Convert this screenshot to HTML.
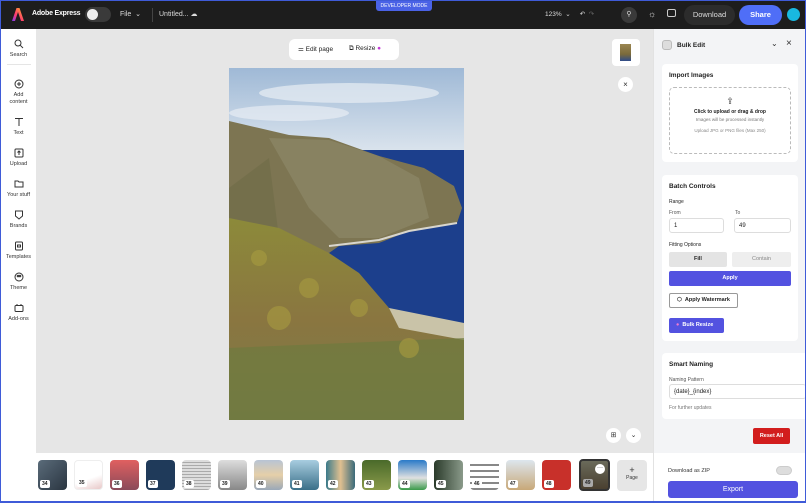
<!DOCTYPE html>
<html><head><meta charset="utf-8"><style>
*{box-sizing:border-box;margin:0;padding:0}
body{width:806px;height:503px;overflow:hidden;font-family:"Liberation Sans",sans-serif;position:relative;background:#3f5bd8}
.a{position:absolute}
#frame{position:absolute;left:1px;top:1px;right:1px;bottom:2px;background:#fff;overflow:hidden}
.top{left:0;top:0;width:804px;height:28px;background:#1d1d1d;color:#ddd;font-size:8px}
.side{left:0;top:28px;width:35px;height:472px;background:#fff}
.si{position:absolute;left:0;width:35px;text-align:center;font-size:5.5px;color:#333;line-height:7px}
.si svg{display:block;margin:0 auto 3px}
.canvas{left:35px;top:28px;width:617px;height:424px;background:#e6e6e6}
.strip{left:35px;top:452px;width:617px;height:48px;background:#fff}
.th{position:absolute;top:7px;width:29px;height:30px;border-radius:4px;overflow:hidden}
.th b{position:absolute;left:2px;bottom:2px;background:#fff;color:#222;font-size:5px;padding:1px 2px;border-radius:2px;font-weight:bold}
.panel{left:652px;top:28px;width:152px;height:472px;background:#f3f4f6;border-left:1px solid #e2e2e2}
.card{position:absolute;left:8px;width:136px;background:#fff;border-radius:4px}
.t{font-size:6.5px;font-weight:bold;color:#222;position:absolute}
.s{font-size:5px;color:#555;position:absolute}
.inp{position:absolute;height:15px;border:1px solid #ddd;border-radius:3px;background:#fff;font-size:6px;padding:4px 4px;color:#222}
</style></head><body>
<div id="frame">
<div class="a top">
  <svg class="a" style="left:11px;top:7px" width="12" height="13" viewBox="0 0 12 13"><defs><linearGradient id="g" x1="0" x2="1" y1="1" y2="0"><stop offset="0" stop-color="#7b3df2"/><stop offset=".4" stop-color="#ff3a6e"/><stop offset="1" stop-color="#ffb627"/></linearGradient></defs><path d="M4.5 0H7.5L12 13H9L6 4 3 13H0Z" fill="url(#g)"/></svg>
  <div class="a" style="left:31px;top:9px;font-weight:bold;color:#fff;font-size:7px;letter-spacing:-.2px">Adobe Express</div>
  <div class="a" style="left:84px;top:6px;width:26px;height:15px;border-radius:8px;background:#3a3a3a"></div>
  <div class="a" style="left:86px;top:8px;width:11px;height:11px;border-radius:50%;background:#eee"></div>
  <div class="a" style="left:119px;top:9px;font-size:7px">File &nbsp;⌄</div>
  <div class="a" style="left:151px;top:7px;width:1px;height:14px;background:#444"></div>
  <div class="a" style="left:158px;top:9px;font-size:7px">Untitled... ☁</div>
  <div class="a" style="left:375px;top:0;width:56px;height:10px;background:#4a62e6;border-radius:0 0 3px 3px;font-size:5px;color:#fff;text-align:center;line-height:10px">DEVELOPER MODE</div>
  <div class="a" style="left:544px;top:9px;font-size:6.5px">123% &nbsp;⌄ &nbsp;&nbsp;&nbsp; ↶ &nbsp;<span style="color:#666">↷</span></div>
  <div class="a" style="left:620px;top:6px;width:16px;height:16px;border-radius:50%;background:#3a3a3a;font-size:7px;text-align:center;line-height:16px">⚲</div>
  <div class="a" style="left:647px;top:8px;font-size:9px">☼</div>
  <div class="a" style="left:666px;top:8px;width:9px;height:8px;border:1px solid #ccc;border-radius:2px"></div>
  <div class="a" style="left:683px;top:4px;width:51px;height:20px;border-radius:10px;background:#2c2c2c;color:#ddd;font-size:7.5px;text-align:center;line-height:20px">Download</div>
  <div class="a" style="left:738px;top:4px;width:43px;height:20px;border-radius:10px;background:#4f6ef7;color:#fff;font-size:7.5px;text-align:center;line-height:20px;font-weight:bold">Share</div>
  <div class="a" style="left:786px;top:7px;width:13px;height:13px;border-radius:50%;background:#19b8e0"></div>
</div>

<div class="a side">
  <div style="position:absolute;left:6px;top:35px;width:24px;height:1px;background:#e5e5e5"></div>
  <div class="si" style="top:10px"><svg width="10" height="10" viewBox="0 0 10 10" fill="none" stroke="#333" stroke-width="1"><circle cx="4" cy="4" r="3"/><path d="M6.3 6.3 9 9"/></svg>Search</div>
  <div class="si" style="top:50px"><svg width="10" height="10" viewBox="0 0 10 10" fill="none" stroke="#333"><circle cx="5" cy="5" r="4"/><path d="M5 3v4M3 5h4"/></svg>Add<br>content</div>
  <div class="si" style="top:88px"><svg width="10" height="10" viewBox="0 0 10 10" fill="none" stroke="#333"><path d="M1 1.5h8M5 1.5V9"/></svg>Text</div>
  <div class="si" style="top:119px"><svg width="10" height="10" viewBox="0 0 10 10" fill="none" stroke="#333"><rect x="1" y="1" width="8" height="8" rx="1"/><path d="M5 7V3M3.5 4.5 5 3l1.5 1.5"/></svg>Upload</div>
  <div class="si" style="top:150px"><svg width="10" height="10" viewBox="0 0 10 10" fill="none" stroke="#333"><path d="M1 2h3l1 1h4v5H1z"/></svg>Your stuff</div>
  <div class="si" style="top:181px"><svg width="10" height="10" viewBox="0 0 10 10" fill="none" stroke="#333"><path d="M1.5 1h7v5L5 9 1.5 6z"/></svg>Brands</div>
  <div class="si" style="top:212px"><svg width="10" height="10" viewBox="0 0 10 10" fill="none" stroke="#333"><rect x="1.5" y="1" width="7" height="8" rx="1"/><path d="M3.5 4h3v2h-3z"/></svg>Templates</div>
  <div class="si" style="top:243px"><svg width="10" height="10" viewBox="0 0 10 10" fill="none" stroke="#333"><circle cx="5" cy="5" r="4"/><circle cx="4" cy="4" r=".8"/><circle cx="6" cy="4" r=".8"/></svg>Theme</div>
  <div class="si" style="top:274px"><svg width="10" height="10" viewBox="0 0 10 10" fill="none" stroke="#333"><rect x="1" y="2.5" width="8" height="6" rx="1"/><path d="M3 2.5V1M7 2.5V1"/></svg>Add-ons</div>
</div>

<div class="a canvas">
  <div class="a" style="left:253px;top:10px;width:110px;height:21px;background:#fff;border-radius:6px;font-size:6.5px;color:#222">
    <span class="a" style="left:9px;top:6px">⚌ Edit page</span>
    <span class="a" style="left:60px;top:6px">⧉ Resize <span style="color:#c13ad6">●</span></span>
  </div>
  <div class="a" style="left:576px;top:10px;width:28px;height:27px;background:#fff;border-radius:4px"><div class="a" style="left:8px;top:5px;width:11px;height:17px;background:linear-gradient(#9b8652,#7a6a3a 60%,#2e4c8a)"></div></div>
  <div class="a" style="left:582px;top:48px;width:15px;height:15px;border-radius:50%;background:#fff;font-size:8px;text-align:center;line-height:15px;color:#333">×</div>
  <div class="a" style="left:193px;top:39px;width:235px;height:352px;overflow:hidden">
    <svg width="235" height="352" viewBox="0 0 235 352">
      <defs><linearGradient id="sky" x1="0" y1="0" x2="0" y2="1"><stop offset="0" stop-color="#9fb9d6"/><stop offset="1" stop-color="#dfe7ef"/></linearGradient>
      <linearGradient id="fg" x1="0" y1="0" x2="0" y2="1"><stop offset="0" stop-color="#8c8a3a"/><stop offset=".5" stop-color="#8a7640"/><stop offset="1" stop-color="#7a7a48"/></linearGradient></defs>
      <rect width="235" height="90" fill="url(#sky)"/>
      <ellipse cx="120" cy="25" rx="90" ry="10" fill="#e8eef4" opacity=".7"/>
      <ellipse cx="60" cy="45" rx="60" ry="8" fill="#eef2f6" opacity=".6"/>
      <rect y="82" width="235" height="190" fill="#1c3f8c"/>
      <polygon points="0,53 60,67 100,70 150,88 195,100 225,118 233,140 228,155 180,163 150,175 110,178 100,185 60,175 0,150" fill="#7d7552"/>
      <polygon points="40,70 100,72 150,88 190,110 200,150 150,170 110,170 80,140" fill="#908a6c" opacity=".6"/>
      <polygon points="0,120 40,90 50,170 0,150" fill="#6e6a48" opacity=".6"/>
      <polyline points="100,178 150,172 180,163 228,155" fill="none" stroke="#d8d6ce" stroke-width="2"/>
      <polygon points="0,150 50,160 100,185 130,205 160,240 170,250 235,262 235,352 0,352" fill="url(#fg)"/>
      <polygon points="160,240 235,255 235,272 170,260" fill="#c9c3a8"/>
      <polygon points="0,280 235,270 235,352 0,352" fill="#6d7a3e" opacity=".7"/>
      <g fill="#a89c40" opacity=".6"><circle cx="30" cy="190" r="8"/><circle cx="80" cy="220" r="10"/><circle cx="130" cy="240" r="9"/><circle cx="50" cy="250" r="12"/><circle cx="180" cy="280" r="10"/></g>
    </svg>
  </div>
  <div class="a" style="left:570px;top:399px;width:15px;height:15px;border-radius:50%;background:#fff;font-size:7px;text-align:center;line-height:15px;color:#333">⊞</div>
  <div class="a" style="left:590px;top:399px;width:15px;height:15px;border-radius:50%;background:#fff;font-size:7px;text-align:center;line-height:15px;color:#333">⌄</div>
</div>

<div class="a strip">
  <div class="th" style="left:2px;background:linear-gradient(135deg,#5a6b7a,#2a3540)"><b>34</b></div>
  <div class="th" style="left:38px;background:linear-gradient(160deg,#fff 60%,#e8c8c8);border:1px solid #eee"><b>35</b></div>
  <div class="th" style="left:74px;background:linear-gradient(#e06060,#8a4a5a)"><b>36</b></div>
  <div class="th" style="left:110px;background:#1f3a5a"><b>37</b></div>
  <div class="th" style="left:146px;background:repeating-linear-gradient(#ddd 0 2px,#aaa 2px 3px)"><b>38</b></div>
  <div class="th" style="left:182px;background:linear-gradient(#ddd,#888)"><b>39</b></div>
  <div class="th" style="left:218px;background:linear-gradient(#b8c4d4,#e6cfa8 50%,#9aa8b8)"><b>40</b></div>
  <div class="th" style="left:254px;background:linear-gradient(#a8cde0,#3a6f88)"><b>41</b></div>
  <div class="th" style="left:290px;background:linear-gradient(90deg,#3a7a8a,#e0c090,#3a6a7a)"><b>42</b></div>
  <div class="th" style="left:326px;background:linear-gradient(#4a6a2a,#8a9a4a)"><b>43</b></div>
  <div class="th" style="left:362px;background:linear-gradient(#2a7ac8,#e0e0e0 60%,#3a9a4a)"><b>44</b></div>
  <div class="th" style="left:398px;background:linear-gradient(90deg,#2a3a2a,#8a9a8a)"><b>45</b></div>
  <div class="th" style="left:434px;background:repeating-linear-gradient(#fff 0 4px,#888 4px 6px)"><b>46</b></div>
  <div class="th" style="left:470px;background:linear-gradient(#dde6ee,#c8a878)"><b>47</b></div>
  <div class="th" style="left:506px;background:#c8302a"><b>48</b></div>
  <div class="th" style="left:543px;top:6px;width:31px;height:32px;border:2px solid #333;background:linear-gradient(#6a6a5a,#4a4030)"><b style="background:#aaa">49</b><div class="a" style="right:3px;top:3px;width:10px;height:10px;border-radius:50%;background:#fff;font-size:6px;text-align:center;line-height:8px">···</div></div>
  <div class="a" style="left:581px;top:7px;width:30px;height:31px;background:#e6e6e6;border-radius:4px;font-size:5px;text-align:center;color:#333;padding-top:5px"><span style="font-size:9px">+</span><br>Page</div>
</div>

<div class="a panel">
  <div class="a" style="left:8px;top:11px;width:10px;height:10px;border-radius:3px;background:#ddd;border:1px solid #bbb"></div>
  <div class="t" style="left:23px;top:13px;font-size:6.5px">Bulk Edit</div>
  <div class="a" style="left:117px;top:10px;font-size:8px;color:#333">⌄</div>
  <div class="a" style="left:132px;top:9px;font-size:10px;color:#333">×</div>
  <div class="card" style="top:35px;height:98px">
    <div class="t" style="left:7px;top:8px">Import Images</div>
    <div class="a" style="left:7px;top:23px;width:122px;height:67px;border:1px dashed #bbb;border-radius:5px;text-align:center">
      <div style="font-size:9px;margin-top:8px;color:#333">⇪</div>
      <div style="font-size:5px;font-weight:bold;color:#222;margin-top:2px">Click to upload or drag &amp; drop</div>
      <div style="font-size:4.5px;color:#777;margin-top:2px">Images will be processed instantly</div>
      <div style="font-size:4.5px;color:#888;margin-top:6px">Upload JPG or PNG files (Max 250)</div>
    </div>
  </div>
  <div class="card" style="top:146px;height:166px">
    <div class="t" style="left:7px;top:8px">Batch Controls</div>
    <div class="s" style="left:7px;top:24px;color:#222">Range</div>
    <div class="s" style="left:7px;top:35px">From</div>
    <div class="s" style="left:73px;top:35px">To</div>
    <div class="inp" style="left:7px;top:43px;width:55px">1</div>
    <div class="inp" style="left:72px;top:43px;width:57px">49</div>
    <div class="s" style="left:7px;top:67px;color:#222">Fitting Options</div>
    <div class="a" style="left:7px;top:77px;width:58px;height:15px;background:#e4e4e4;border-radius:2px;font-size:5.5px;text-align:center;line-height:15px;font-weight:bold;color:#222">Fill</div>
    <div class="a" style="left:70px;top:77px;width:59px;height:15px;background:#eee;border-radius:2px;font-size:5.5px;text-align:center;line-height:15px;color:#888">Contain</div>
    <div class="a" style="left:7px;top:96px;width:122px;height:15px;background:#5352e0;border-radius:2px;font-size:5.5px;text-align:center;line-height:15px;font-weight:bold;color:#fff">Apply</div>
    <div class="a" style="left:7px;top:118px;width:69px;height:15px;background:#fff;border:1px solid #999;border-radius:2px;font-size:5.5px;line-height:13px;font-weight:bold;color:#222;padding-left:7px">⬡ &nbsp;Apply Watermark</div>
    <div class="a" style="left:7px;top:143px;width:55px;height:15px;background:#5352e0;border-radius:2px;font-size:5.5px;line-height:15px;font-weight:bold;color:#fff;padding-left:7px"><span style="color:#f07ad0">●</span> &nbsp;Bulk Resize</div>
  </div>
  <div class="card" style="top:324px;height:66px;width:144px;border-radius:4px 0 0 4px">
    <div class="t" style="left:7px;top:8px">Smart Naming</div>
    <div class="s" style="left:7px;top:24px">Naming Pattern</div>
    <div class="inp" style="left:7px;top:31px;width:137px;border-right:none">{date}_{index}</div>
    <div class="s" style="left:7px;top:52px;color:#777">For further updates</div>
  </div>
  <div class="a" style="left:99px;top:399px;width:37px;height:16px;background:#d21d1d;border-radius:2px;font-size:5.5px;color:#fff;text-align:center;line-height:16px;font-weight:bold">Reset All</div>
  <div class="a" style="left:0;top:424px;width:152px;height:48px;background:#fff"></div>
  <div class="s" style="left:14px;top:439px;color:#333;font-size:5.5px">Download as ZIP</div>
  <div class="a" style="left:122px;top:437px;width:16px;height:9px;border-radius:5px;background:#ddd;border:1px solid #ccc"></div>
  <div class="a" style="left:14px;top:452px;width:130px;height:17px;background:#5352e0;border-radius:3px;font-size:7px;color:#fff;text-align:center;line-height:17px">Export</div>
</div>
</div>
</body></html>
